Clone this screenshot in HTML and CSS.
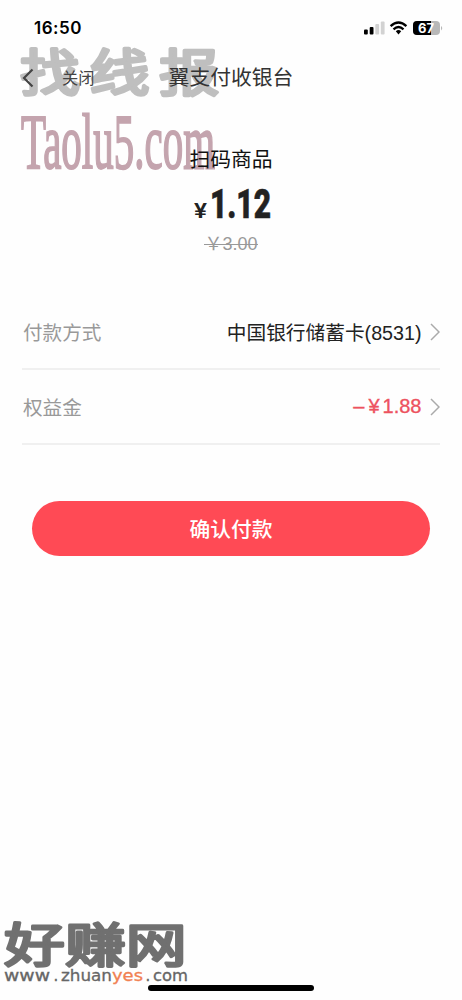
FILE: index.html
```html
<!DOCTYPE html>
<html lang="zh-CN">
<head>
<meta charset="UTF-8">
<meta name="viewport" content="width=device-width, initial-scale=1">
<title>翼支付收银台</title>
<link rel="stylesheet" href="styles.css">
</head>
<body>
<div class="screen">
  <svg class="watermark-top" viewBox="0 0 240 140" aria-hidden="true">
    <g class="brush" transform="translate(20 51) scale(1.200 1)">
      <text x="0" y="0">找</text><text x="58" y="0">线</text><text x="116" y="0">报</text>
    </g>
    <text class="domain" x="21" y="127.500" textLength="194" lengthAdjust="spacingAndGlyphs">Taolu5.com</text>
  </svg>

  <div class="status">
    <span class="time">16:50</span>
    <svg class="indicators" width="82" height="20" viewBox="0 0 82 20">
      <rect x="1" y="11.500" width="3.800" height="5" rx="1"/>
      <rect x="6.700" y="9" width="3.800" height="7.500" rx="1"/>
      <g fill="#d2d2d2"><rect x="12.300" y="6" width="3.800" height="10.500" rx="1"/><rect x="17.800" y="3.500" width="3.800" height="13" rx="1"/></g>
      <g fill="none" stroke="#000" stroke-width="2.300"><path d="M27.600 8.200Q35.500 .8 43.400 8.200"/><path d="M30.500 11.300Q35.500 6.800 40.500 11.300"/></g>
      <path d="M32.800 13.200Q35.500 11 38.200 13.200L35.500 16.500Z"/>
      <rect x="50" y="3" width="27" height="14" rx="4" fill="#b8b8b8"/>
      <path d="M54 3H68V17H54Q50 17 50 13V7Q50 3 54 3Z"/>
      <path d="M78 8Q80.500 10 78 12.500Z" fill="#b8b8b8"/>
      <text class="charge" x="55" y="14.600" textLength="16" lengthAdjust="spacingAndGlyphs">67</text>
    </svg>
  </div>

  <header class="nav">
    <svg class="back" width="12" height="20" viewBox="0 0 12 20"><path d="M10.500 1.500L2 10L10.500 18.500"/></svg>
    <span class="close">关闭</span>
    <h1>翼支付收银台</h1>
  </header>

  <section class="summary">
    <div class="product">扫码商品</div>
    <svg class="price" width="80" height="40" viewBox="0 0 80 40">
      <text class="yen" x="3" y="33" textLength="13" lengthAdjust="spacingAndGlyphs">¥</text>
      <text class="amount" x="19" y="33" textLength="61" lengthAdjust="spacingAndGlyphs">1.12</text>
    </svg>
    <div class="original"><span class="fullyen">￥</span>3.00</div>
  </section>

  <section class="rows">
    <div class="row">
      <span class="label">付款方式</span>
      <span class="value">中国银行储蓄卡(8531)</span>
      <svg class="arrow" width="10" height="18" viewBox="0 0 10 18"><path d="M1 1L9 9L1 17"/></svg>
    </div>
    <div class="row">
      <span class="label">权益金</span>
      <span class="value discount">–<span class="discount-yen">¥</span>1.88</span>
      <svg class="arrow" width="10" height="18" viewBox="0 0 10 18"><path d="M1 1L9 9L1 17"/></svg>
    </div>
  </section>

  <button class="pay">确认付款</button>

  <svg class="watermark-bottom" viewBox="0 0 200 80" aria-hidden="true">
    <text class="brand" transform="translate(4 42) scale(1.310 1)" x="0" y="0">好赚网</text>
    <g class="site">
      <text x="4" y="61" textLength="46" lengthAdjust="spacingAndGlyphs">www</text>
      <text x="53.500" y="61">.</text>
      <text x="61" y="61" textLength="51" lengthAdjust="spacingAndGlyphs">zhuan</text>
      <text class="accent" x="112" y="61" textLength="31" lengthAdjust="spacingAndGlyphs">yes</text>
      <text x="145.500" y="61">.</text>
      <text x="153" y="61" textLength="35" lengthAdjust="spacingAndGlyphs">com</text>
    </g>
  </svg>
  <div class="home-indicator"></div>
</div>
</body>
</html>
```
FILE: styles.css
```css
* { box-sizing: border-box; }
body { margin: 0; background: #fff; }
.screen {
  position: relative;
  isolation: isolate;
  display: flex;
  flex-direction: column;
  width: 462px;
  height: 1000px;
  overflow: hidden;
  background: #fefefe;
  color: #222;
  font-family: "Liberation Sans", "Noto Sans CJK SC", sans-serif;
}
.status {
  display: flex;
  justify-content: space-between;
  align-items: center;
  height: 40px;
  padding: 16px 17px 0 34px;
}
.time { font: 600 17px/24px Inter, sans-serif; color: #000; letter-spacing: .5px; }
.charge { font: 700 13px Inter, sans-serif; fill: #fff; }
.nav {
  display: grid;
  grid-template-columns: 12px 1fr;
  align-items: center;
  height: 76px;
  padding: 0 22px;
}
.nav > * { grid-row: 1; }
.back { grid-column: 1; fill: none; stroke: #444; stroke-width: 2.2; }
.close { grid-column: 2; padding-left: 28px; font-size: 16.3px; line-height: 24px; color: #444; }
.nav h1 { grid-column: 1 / -1; margin: 0; text-align: center; font-size: 20.8px; line-height: 30px; font-weight: 400; color: #333; }
.summary { display: flex; flex-direction: column; align-items: center; height: 179px; padding-top: 29px; }
.product { font-size: 20.8px; line-height: 30px; color: #111; }
.price { margin-top: 10px; overflow: visible; }
.yen { font: 600 20px Roboto, sans-serif; fill: #222; }
.amount { font: 900 41px Roboto, sans-serif; fill: #222; stroke: #222; stroke-width: .6px; }
.original { position: relative; display: flex; margin-top: 8px; font-size: 18px; line-height: 22px; color: #999; }
.original::after { content: ""; position: absolute; left: 0; right: 0; top: 11px; height: 1px; background: #999; }
.rows { display: flex; flex-direction: column; padding: 0 22px; }
.row { display: flex; align-items: center; height: 75px; border-bottom: 2px solid #f0f0f0; }
.label { flex: 1; padding-left: 1px; font-size: 19.6px; color: #999; }
.value { font-size: 19.7px; }
.discount { display: flex; align-items: center; color: #ed5260; font-size: 20px; -webkit-text-stroke: .35px #ed5260; }
.discount-yen { margin: 0 3px 0 4px; }
.arrow { margin-left: 8.5px; fill: none; stroke: #aaa; stroke-width: 1.5; }
.pay {
  margin: 56px 32px 0;
  height: 55px;
  padding: 0 0 2px;
  border: 0;
  border-radius: 28px;
  background: #ff4a55;
  color: #fff;
  font: 500 20.8px "Noto Sans CJK SC", sans-serif;
}
.watermark-top { position: absolute; z-index: -1; left: 0; top: 40px; width: 240px; height: 140px; overflow: visible; }
.brush { font: 400 50px "Noto Sans CJK SC", sans-serif; fill: #bfbfbf; stroke: #bfbfbf; stroke-width: 3.4px; stroke-linejoin: round; }
.domain { font: 400 79px "Liberation Serif", serif; fill: #c4a4ae; stroke: #c4a4ae; stroke-width: 2px; }
.watermark-bottom { position: absolute; left: 0; top: 920px; width: 200px; height: 80px; overflow: visible; }
.brand { font: 400 46.5px "Noto Sans CJK SC", sans-serif; fill: #707070; stroke: #707070; stroke-width: 2.8px; stroke-linejoin: round; }
.site { font: 400 15px "DejaVu Sans", sans-serif; fill: #666; stroke: #666; stroke-width: .3px; }
.accent { fill: #f18152; stroke: #f18152; }
.home-indicator { position: absolute; left: 148px; top: 985px; width: 166px; height: 6px; border-radius: 3px; background: #000; }
```
